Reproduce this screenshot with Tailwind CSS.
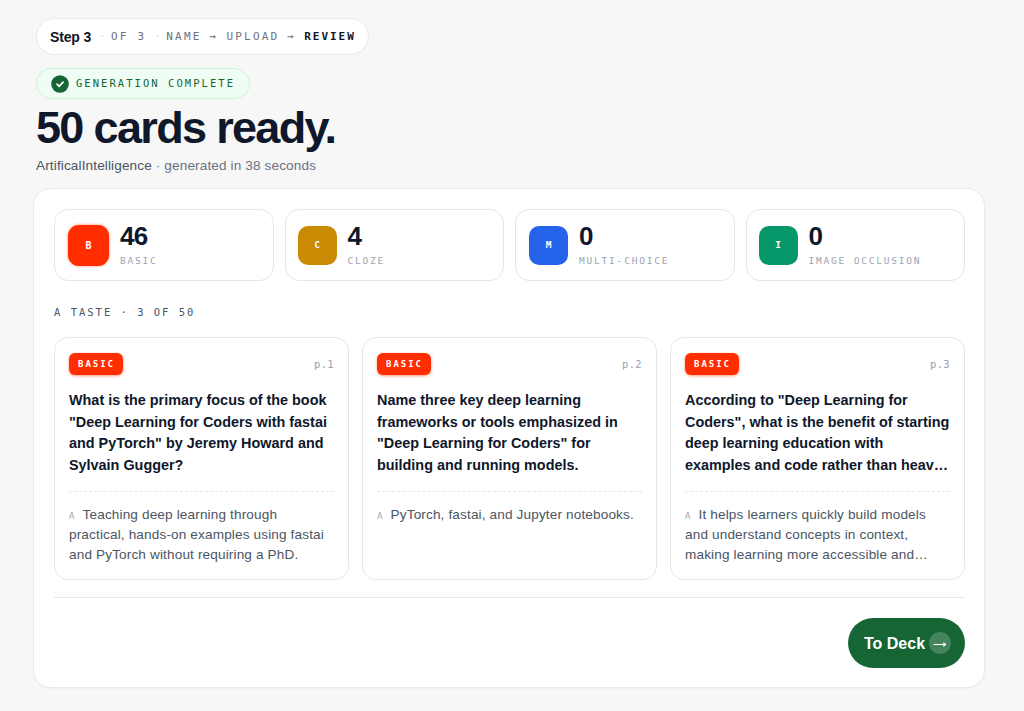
<!DOCTYPE html>
<html lang="en">
<head>
  <meta charset="UTF-8" />
  <meta name="viewport" content="width=device-width, initial-scale=1.0"/>
  <title>Review cards</title>
  <script src="https://cdn.jsdelivr.net/npm/@tailwindcss/browser@4"></script>
</head>
<body class="h-[711px] overflow-hidden bg-[#f7f7f7] pt-[18px] font-['Liberation_Sans',Arial,sans-serif] text-[#0f172a]">

  <!-- Header -->
  <header class="flex flex-col items-start pl-9">
    <nav class="flex h-[37px] items-center gap-2 rounded-full border border-[#e8e9eb] bg-white pl-[13px] pr-3 font-['DejaVu_Sans_Mono',monospace] text-[11px] leading-4 tracking-[0.2em] text-[#6b7280]">
      <span class="w-[41px] whitespace-nowrap font-['Liberation_Sans',Arial,sans-serif] text-sm font-bold tracking-[-0.01em] text-[#0f172a]">Step 3</span>
      <span class="w-1 text-center tracking-normal text-[#d1d5db]">·</span>
      <span>OF 3</span>
      <span class="w-1 text-center tracking-normal text-[#d1d5db]">·</span>
      <span>NAME</span>
      <span>→</span>
      <span>UPLOAD</span>
      <span>→</span>
      <span class="font-bold tracking-[0.18em] text-[#0f172a]">REVIEW</span>
    </nav>

    <div class="mt-[13px] flex h-[31px] items-center gap-[7px] rounded-full border border-[#c9f5d7] bg-[#f0fdf4] px-3.5 font-['DejaVu_Sans_Mono',monospace] text-[10.5px] tracking-[0.195em] text-[#166534]">
      <svg class="size-[18px]" viewBox="0 0 18 18" fill="none">
        <circle cx="9" cy="9" r="8.8" fill="#166534"/>
        <path d="M6 9.2l2.1 2.1 4-4.2" stroke="#fff" stroke-width="1.7" stroke-linecap="round" stroke-linejoin="round"/>
      </svg>
      <span>GENERATION COMPLETE</span>
    </div>

    <h1 class="mt-[5px] text-[45px] leading-[48px] font-bold tracking-[-0.037em]">50 cards ready.</h1>
    <p class="mt-1 text-[13.6px] leading-5 tracking-[0.009em] text-[#6b7280]"><span class="text-[#4b5563]">ArtificalIntelligence</span> · generated in 38 seconds</p>
  </header>

  <main class="mt-3 ml-[33px] h-[500px] w-[952px] rounded-[18px] border border-[#e9eaeb] bg-white py-5 pr-[19px] pl-5 shadow-[0_1px_2px_rgba(0,0,0,0.03)]">

    <!-- Card type counts -->
    <section class="grid grid-cols-4 gap-[11px]">
      <div class="flex h-[72px] items-center gap-[11px] rounded-[14px] border border-[#e5e7eb] pl-[13px]">
        <div class="flex size-[41px] items-center justify-center rounded-[11px] bg-[#ff2d00] font-['DejaVu_Sans_Mono',monospace] text-[10px] font-bold text-white shadow-[0_0_3px_rgba(255,45,0,0.6)]">B</div>
        <div>
          <div class="text-[26px] leading-[26px] font-bold tracking-[-0.03em]">46</div>
          <div class="mt-1.5 font-['DejaVu_Sans_Mono',monospace] text-[9.5px] leading-3 tracking-[0.19em] text-[#9ca3af]">BASIC</div>
        </div>
      </div>
      <div class="flex h-[72px] items-center gap-[11px] rounded-[14px] border border-[#e5e7eb] pl-3">
        <div class="flex size-[39px] items-center justify-center rounded-[10px] bg-[#ca8a04] pt-px font-['DejaVu_Sans_Mono',monospace] text-[9.5px] font-bold text-white">C</div>
        <div>
          <div class="text-[26px] leading-[26px] font-bold tracking-[-0.03em]">4</div>
          <div class="mt-1.5 font-['DejaVu_Sans_Mono',monospace] text-[9.5px] leading-3 tracking-[0.19em] text-[#9ca3af]">CLOZE</div>
        </div>
      </div>
      <div class="flex h-[72px] items-center gap-[11px] rounded-[14px] border border-[#e5e7eb] pl-[13px]">
        <div class="flex size-[39px] items-center justify-center rounded-[10px] bg-[#2563eb] pt-px font-['DejaVu_Sans_Mono',monospace] text-[9.5px] font-bold text-white">M</div>
        <div>
          <div class="text-[26px] leading-[26px] font-bold tracking-[-0.03em]">0</div>
          <div class="mt-1.5 font-['DejaVu_Sans_Mono',monospace] text-[9.5px] leading-3 tracking-[0.19em] text-[#9ca3af]">MULTI-CHOICE</div>
        </div>
      </div>
      <div class="flex h-[72px] items-center gap-[11px] rounded-[14px] border border-[#e5e7eb] pl-3">
        <div class="flex size-[39px] items-center justify-center rounded-[10px] bg-[#059669] pt-px font-['DejaVu_Sans_Mono',monospace] text-[9.5px] font-bold text-white">I</div>
        <div>
          <div class="text-[26px] leading-[26px] font-bold tracking-[-0.03em]">0</div>
          <div class="mt-1.5 font-['DejaVu_Sans_Mono',monospace] text-[9.5px] leading-3 tracking-[0.19em] whitespace-nowrap text-[#9ca3af]">IMAGE OCCLUSION</div>
        </div>
      </div>
    </section>

    <h2 class="mt-[23px] font-['DejaVu_Sans_Mono',monospace] text-[10.5px] leading-4 tracking-[0.19em] text-[#4b5563]">A TASTE · 3 OF 50</h2>

    <!-- Sample cards -->
    <section class="mt-[17px] grid grid-cols-3 gap-[13px]">
      <article class="h-[243px] rounded-[14px] border border-[#e5e7eb] px-3.5 pt-[15px]">
        <div class="flex items-center justify-between font-['DejaVu_Sans_Mono',monospace]">
          <span class="flex h-[22px] w-[54px] items-center rounded-md bg-[#ff2d00] pt-px pl-[9px] text-[9px] font-bold tracking-[0.22em] text-white shadow-[0_1px_3px_rgba(255,45,0,0.5)]">BASIC</span>
          <span class="pt-px text-[10.5px] tracking-[0.03em] text-[#9ca3af]">p.1</span>
        </div>
        <p class="mt-[15px] h-[86px] text-[14.4px] leading-[21.6px] font-bold">What is the primary focus of the book "Deep Learning for Coders with fastai and PyTorch" by Jeremy Howard and Sylvain Gugger?</p>
        <p class="mt-[15px] border-t border-dashed border-[#e5e7eb] pt-[13px] text-[13.6px] leading-[20.2px] tracking-[0.01em] text-[#4b5563]"><span class="mr-2 font-['DejaVu_Sans_Mono',monospace] text-[9px] leading-none text-[#9ca3af]">A</span>Teaching deep learning through practical, hands-on examples using fastai and PyTorch without requiring a PhD.</p>
      </article>
      <article class="h-[243px] rounded-[14px] border border-[#e5e7eb] px-3.5 pt-[15px]">
        <div class="flex items-center justify-between font-['DejaVu_Sans_Mono',monospace]">
          <span class="flex h-[22px] w-[54px] items-center rounded-md bg-[#ff2d00] pt-px pl-[9px] text-[9px] font-bold tracking-[0.22em] text-white shadow-[0_1px_3px_rgba(255,45,0,0.5)]">BASIC</span>
          <span class="pt-px text-[10.5px] tracking-[0.03em] text-[#9ca3af]">p.2</span>
        </div>
        <p class="mt-[15px] h-[86px] text-[14.4px] leading-[21.6px] font-bold">Name three key deep learning frameworks or tools emphasized in "Deep Learning for Coders" for building and running models.</p>
        <p class="mt-[15px] border-t border-dashed border-[#e5e7eb] pt-[13px] text-[13.6px] leading-[20.2px] tracking-[0.01em] text-[#4b5563]"><span class="mr-2 font-['DejaVu_Sans_Mono',monospace] text-[9px] leading-none text-[#9ca3af]">A</span>PyTorch, fastai, and Jupyter notebooks.</p>
      </article>
      <article class="h-[243px] rounded-[14px] border border-[#e5e7eb] px-3.5 pt-[15px]">
        <div class="flex items-center justify-between font-['DejaVu_Sans_Mono',monospace]">
          <span class="flex h-[22px] w-[54px] items-center rounded-md bg-[#ff2d00] pt-px pl-[9px] text-[9px] font-bold tracking-[0.22em] text-white shadow-[0_1px_3px_rgba(255,45,0,0.5)]">BASIC</span>
          <span class="pt-px text-[10.5px] tracking-[0.03em] text-[#9ca3af]">p.3</span>
        </div>
        <p class="mt-[15px] h-[86px] text-[14.4px] leading-[21.6px] font-bold">According to "Deep Learning for Coders", what is the benefit of starting deep learning education with<br/><span class="whitespace-nowrap">examples and code rather than heav…</span></p>
        <p class="mt-[15px] border-t border-dashed border-[#e5e7eb] pt-[13px] text-[13.6px] leading-[20.2px] tracking-[0.01em] text-[#4b5563]"><span class="mr-2 font-['DejaVu_Sans_Mono',monospace] text-[9px] leading-none text-[#9ca3af]">A</span>It helps learners quickly build models and understand concepts in context, making learning more accessible and…</p>
      </article>
    </section>

    <footer class="mt-[17px] flex justify-end border-t border-[#e5e7eb] pt-5">
      <button type="button" class="flex h-[50px] w-[117px] items-center gap-1 rounded-full bg-[#166534] pl-4 text-base font-bold text-white">
        <span class="pt-px whitespace-nowrap">To Deck</span>
        <span class="flex size-[22px] items-center justify-center rounded-full bg-white/20">
          <svg class="mt-px h-2 w-3.5" viewBox="0 0 14 8" fill="none" stroke="#fff" stroke-width="1.1">
            <path d="M0.5 4.5h12"/>
            <path d="M10.4 2.1l3.2 2.4-3.2 2.4z" fill="#fff" stroke="none"/>
          </svg>
        </span>
      </button>
    </footer>
  </main>
</body>
</html>
